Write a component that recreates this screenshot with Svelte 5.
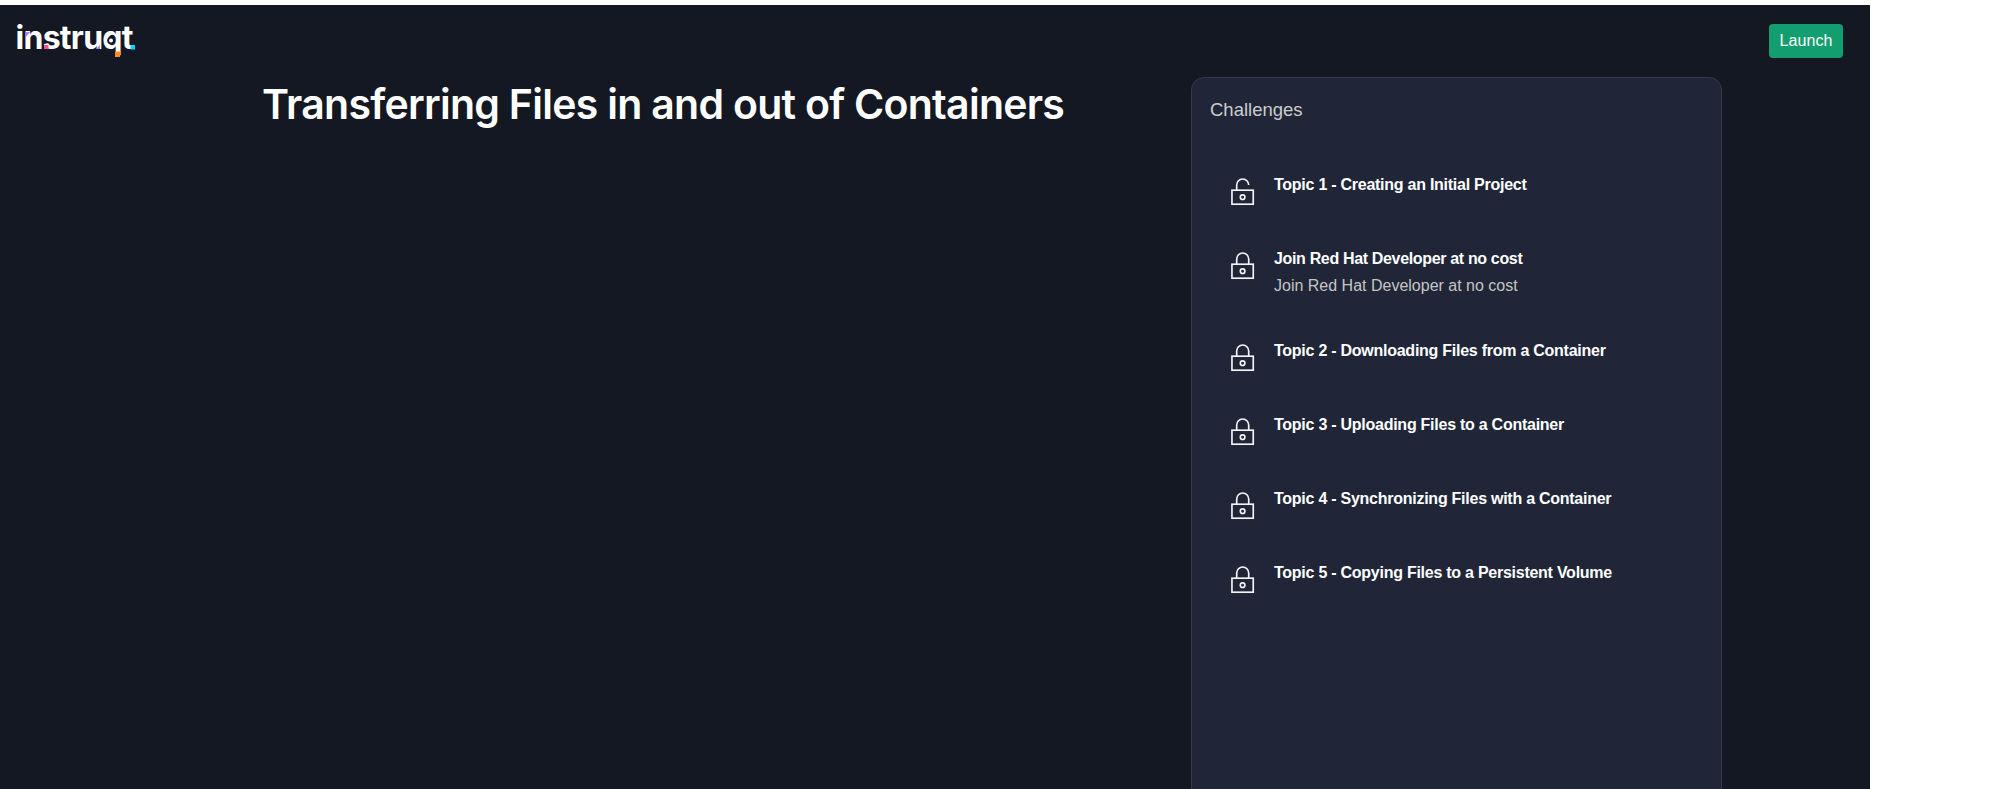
<script>
  const challenges = [
    { title: 'Topic 1 - Creating an Initial Project', open: true },
    { title: 'Join Red Hat Developer at no cost', teaser: 'Join Red Hat Developer at no cost' },
    { title: 'Topic 2 - Downloading Files from a Container' },
    { title: 'Topic 3 - Uploading Files to a Container' },
    { title: 'Topic 4 - Synchronizing Files with a Container' },
    { title: 'Topic 5 - Copying Files to a Persistent Volume' }
  ];
</script>

<div class="page">
  <header>
    <svg class="logo" width="122" height="44" viewBox="0 0 122 44">
      <text x="-0.500" y="25" textLength="118" lengthAdjust="spacing">instruqt</text>
      <path d="M10 8h4l-4 5z" fill="#b07bff" />
      <rect x="28" y="21" width="4.500" height="4" fill="#ff4f9a" />
      <path d="M84 25v-4l-4 4z" fill="#b07bff" />
      <circle cx="95" cy="16.500" r="3.800" fill="#141823" />
      <circle cx="95" cy="16.500" r="2" fill="#fff" />
      <rect x="99" y="27.500" width="5" height="5.500" fill="#ff8c1f" />
      <rect x="114.500" y="21" width="4.500" height="4.500" fill="#00d5ff" />
    </svg>
    <button>Launch</button>
  </header>
  <main>
    <h1>Transferring Files in and out of Containers</h1>
    <aside>
      <h2>Challenges</h2>
      <ul>
        {#each challenges as c}
          <li class:tall={c.teaser}>
            <svg class="lock" width="24" height="28" viewBox="0 0 24 28">
              <rect x="0.950" y="12.200" width="21.300" height="14" />
              {#if c.open}
                <path d="M5.700 12V7a6 6 0 0 1 12 0" />
              {:else}
                <path d="M5.700 12V7a6 6 0 0 1 12 0v5" />
              {/if}
              <circle cx="11.600" cy="19.200" r="2.300" />
            </svg>
            <div>
              <h3>{c.title}</h3>
              {#if c.teaser}<p>{c.teaser}</p>{/if}
            </div>
          </li>
        {/each}
      </ul>
    </aside>
  </main>
</div>

<style>
  :global(body) { background: #fff; overflow: hidden; }
  .page {
    box-sizing: border-box;
    width: 1870px;
    height: 784px;
    margin-top: 5px;
    overflow: hidden;
    display: flex;
    flex-direction: column;
    background: #141823;
    color: #fff;
    font-family: "Liberation Sans", Arial, sans-serif;
  }
  header {
    box-sizing: border-box;
    flex: none;
    height: 72px;
    padding: 19px 27px 0 16px;
    display: flex;
    justify-content: space-between;
    align-items: flex-start;
  }
  .logo { overflow: visible; }
  .logo text { font: 700 32px Inter, sans-serif; fill: #fff; }
  button {
    width: 74px;
    height: 34px;
    padding: 0 0 1px;
    border: 0;
    border-radius: 4px;
    background: #129e6e;
    color: #fff;
    font: 16px "Liberation Sans", Arial, sans-serif;
    letter-spacing: 0.1px;
  }
  main {
    flex: 1;
    display: flex;
    justify-content: space-between;
    padding: 0 148px 0 262px;
  }
  h1 {
    margin: 2px 0 0;
    font: 600 41px/50px Inter, sans-serif;
    letter-spacing: -0.715px;
    white-space: nowrap;
  }
  aside {
    box-sizing: border-box;
    width: 531px;
    height: 760px;
    padding: 20px 17px;
    border: 1px solid #323b49;
    border-radius: 13px;
    background: #202637;
  }
  h2 {
    margin: 0 0 0 1px;
    font-size: 18.500px;
    line-height: 24px;
    font-weight: 400;
    color: #ccc;
  }
  ul { list-style: none; margin: 50px 0 0; padding: 0 0 0 22px; }
  li { display: flex; gap: 19px; height: 74px; }
  li.tall { height: 92px; }
  li div { padding-top: 1px; }
  .lock { flex: none; margin-top: 6px; fill: none; stroke: #f4f5f8; stroke-width: 1.650; }
  h3 {
    margin: 0;
    font-size: 16px;
    line-height: 24px;
    font-weight: 700;
    letter-spacing: -0.255px;
    white-space: nowrap;
  }
  .tall h3 { letter-spacing: -0.340px; }
  p { margin: 3px 0 0; font-size: 16px; line-height: 24px; color: #c4c5c6; }
</style>
